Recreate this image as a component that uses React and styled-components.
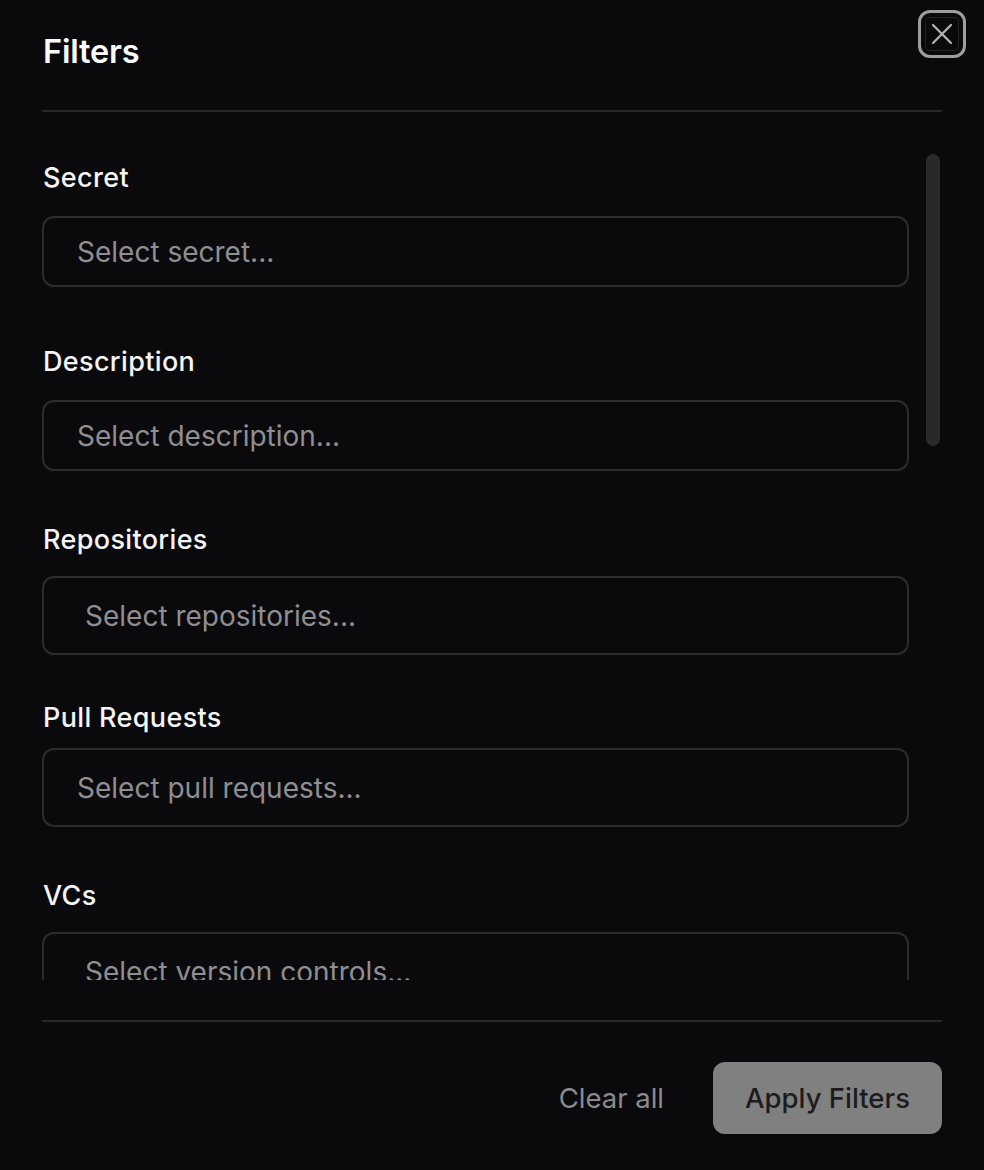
import React from "react";
import styled, { createGlobalStyle } from "styled-components";

const Global = createGlobalStyle`
  html, body { margin: 0; padding: 0; background: #0a0a0c; }
  body { font-family: Inter, "Noto Sans", "Liberation Sans", sans-serif; color: #f4f4f5; }
  * { box-sizing: border-box; }
`;

const Panel = styled.div`
  position: relative;
  width: 984px;
  height: 1170px;
  background: #0a0a0c;
  padding: 0 42px;
  display: flex;
  flex-direction: column;
`;

const Header = styled.div`
  height: 112px;
  display: flex;
  align-items: flex-start;
  border-bottom: 2px solid #27272a;
`;

const Title = styled.h2`
  margin: 31px 0 0 1px;
  font-size: 32.5px;
  line-height: 42px;
  font-weight: 600;
  letter-spacing: -0.2px;
  color: #fafafa;
`;

const CloseButton = styled.button`
  position: absolute;
  top: 10px;
  right: 18px;
  width: 48px;
  height: 48px;
  border-radius: 12px;
  border: 3px solid #9d9da2;
  background: transparent;
  display: flex;
  align-items: center;
  justify-content: center;
  padding: 0;
  box-shadow: inset 0 0 0 4px #0a0a0c, inset 0 0 0 5px #232327;
  cursor: pointer;
`;

const ScrollRegion = styled.div`
  position: relative;
  height: 868px;
  overflow: hidden;
`;

const Content = styled.div`
  width: 867px;
  padding-top: 48px;
  display: flex;
  flex-direction: column;
`;

const Thumb = styled.div`
  position: absolute;
  right: 2px;
  top: 42px;
  width: 14px;
  height: 292px;
  border-radius: 7px;
  background: #29292c;
`;

const Field = styled.div`
  display: flex;
  flex-direction: column;
  margin-top: ${(p) => p.$mt}px;
  gap: ${(p) => p.$gap}px;
`;

const Label = styled.label`
  font-size: 27px;
  line-height: 36px;
  font-weight: 500;
  letter-spacing: 0.35px;
  color: #f4f4f5;
  padding-left: 1px;
`;

const Input = styled.div`
  height: ${(p) => p.$h}px;
  border: 2px solid #2c2c2f;
  border-radius: 12px;
  display: flex;
  align-items: center;
  padding-left: ${(p) => p.$pad}px;
  font-size: 28px;
  color: #8e8e93;
  flex-shrink: 0;
`;

const Footer = styled.div`
  margin-top: 40px;
  border-top: 2px solid #27272a;
  padding-top: 40px;
  display: flex;
  justify-content: flex-end;
  align-items: center;
  gap: 49px;
`;

const GhostButton = styled.button`
  background: transparent;
  border: none;
  padding: 0;
  font-family: inherit;
  font-size: 27.5px;
  color: #8a8a8e;
`;

const PrimaryButton = styled.button`
  width: 229px;
  height: 72px;
  border: none;
  border-radius: 12px;
  background: #808080;
  color: #1c1c1e;
  font-family: inherit;
  font-size: 27.5px;
  font-weight: 500;
`;

const fields = [
  { label: "Secret", ph: "Select secret...", mt: 0, gap: 20, h: 71, pad: 33 },
  { label: "Description", ph: "Select description...", mt: 57, gap: 20, h: 71, pad: 33 },
  { label: "Repositories", ph: "Select repositories...", mt: 51, gap: 18, h: 79, pad: 41 },
  { label: "Pull Requests", ph: "Select pull requests...", mt: 45, gap: 12, h: 79, pad: 33 },
  { label: "VCs", ph: "Select version controls...", mt: 51, gap: 18, h: 79, pad: 41 },
  { label: "Environments", ph: "Select environments...", mt: 51, gap: 18, h: 79, pad: 33 },
];

export default function App() {
  return (
    <>
      <Global />
      <Panel>
        <Header>
          <Title>Filters</Title>
        </Header>
        <CloseButton aria-label="Close">
          <svg width="22" height="22" viewBox="0 0 22 22" fill="none">
            <path d="M2 2L20 20M20 2L2 20" stroke="#b4b4b8" strokeWidth="2.2" strokeLinecap="round" />
          </svg>
        </CloseButton>
        <ScrollRegion>
          <Content>
            {fields.map((f) => (
              <Field key={f.label} $mt={f.mt} $gap={f.gap}>
                <Label>{f.label}</Label>
                <Input $h={f.h} $pad={f.pad}>{f.ph}</Input>
              </Field>
            ))}
          </Content>
          <Thumb />
        </ScrollRegion>
        <Footer>
          <GhostButton>Clear all</GhostButton>
          <PrimaryButton>Apply Filters</PrimaryButton>
        </Footer>
      </Panel>
    </>
  );
}
